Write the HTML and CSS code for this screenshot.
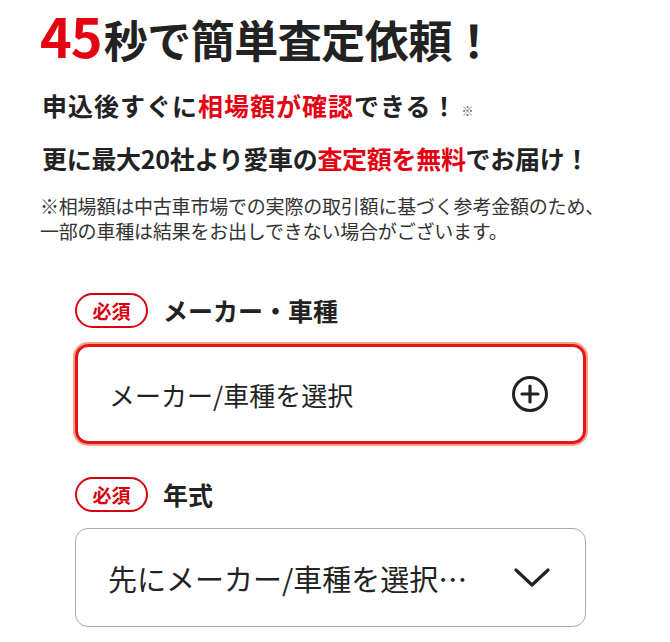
FILE: index.html
```html
<!DOCTYPE html>
<html lang="ja">
<head>
  <meta charset="UTF-8" />
  <meta name="viewport" content="width=device-width, initial-scale=1.0"/>
  <title>45秒で簡単査定依頼</title>
  <link rel="stylesheet" href="styles.css">
</head>
<body>

<div class="container">
  <!-- 見出し -->
  <h1 class="titulo"><span class="num">45</span>秒で簡単査定依頼！</h1>
  <p class="lead lead1">申込後すぐに<span class="rojo">相場額が確認</span>できる！<span class="kome">※</span></p>
  <p class="lead lead2">更に最大20社より愛車の<span class="rojo">査定額を無料</span>でお届け！</p>
  <p class="nota">※相場額は中古車市場での実際の取引額に基づく参考金額のため、<br>一部の車種は結果をお出しできない場合がございます。</p>

  <!-- フォーム -->
  <div class="form">
    <div class="campo">
      <div class="etiqueta"><span class="pill">必須</span>メーカー・車種</div>
      <div class="caja activa">
        <span>メーカー/車種を選択</span>
        <svg class="icono" width="38" height="38" viewBox="0 0 38 38">
          <circle cx="19" cy="19" r="16.5" fill="none" stroke="#222" stroke-width="3"/>
          <path d="M19 11v16M11 19h16" stroke="#222" stroke-width="3.2" stroke-linecap="round"/>
        </svg>
      </div>
    </div>

    <div class="campo">
      <div class="etiqueta"><span class="pill">必須</span>年式</div>
      <div class="caja grande">
        <span>先にメーカー/車種を選択…</span>
        <svg class="icono" width="38" height="24" viewBox="0 0 38 24">
          <path d="M3 4l16 15L35 4" fill="none" stroke="#222" stroke-width="3.2" stroke-linecap="round" stroke-linejoin="round"/>
        </svg>
      </div>
    </div>
  </div>
</div>

</body>
</html>
```

FILE: styles.css
```css
* {
  box-sizing: border-box;
}

body {
  font-family: "Noto Sans CJK JP", "Noto Sans", sans-serif;
  margin: 0;
  padding: 0;
  background: #fff;
  color: #222;
}

.container {
  padding: 8px 0 0 40px;
}

.rojo,
.num {
  color: #e50012;
}

.titulo {
  margin: 0;
  font-size: 44px;
  line-height: 62px;
  font-weight: 700;
  letter-spacing: -0.5px;
}

.titulo .num {
  font-size: 54px;
  line-height: 1;
  letter-spacing: -1px;
  margin-right: 2px;
}

.lead {
  margin: 0;
  font-weight: 700;
  line-height: 54px;
  padding-left: 2px;
}

.lead1 {
  margin-top: 8px;
  font-size: 25px;
  letter-spacing: 1px;
}

.lead2 {
  margin-top: -1px;
  font-size: 25px;
  letter-spacing: -0.3px;
}

.kome {
  font-size: 12px;
  line-height: 1;
  font-weight: 400;
  color: #555;
  margin-left: 4px;
}

.nota {
  margin: 8px 0 0;
  font-size: 19px;
  line-height: 25px;
  color: #333;
  letter-spacing: -0.2px;
}

.form {
  padding: 49px 0 0 35px;
  width: 546px;
}

.campo {
  margin-bottom: 32px;
}

.etiqueta {
  display: flex;
  align-items: center;
  gap: 15px;
  font-size: 25px;
  font-weight: 700;
  height: 36px;
  margin-bottom: 16px;
}

.pill {
  display: inline-flex;
  align-items: center;
  justify-content: center;
  width: 73px;
  height: 35px;
  border: 2px solid #d7000f;
  border-radius: 18px;
  color: #d7000f;
  font-size: 19px;
  font-weight: 700;
}

.caja {
  display: flex;
  align-items: center;
  justify-content: space-between;
  height: 99px;
  padding: 0 34px 0 32px;
  border: 1.5px solid #a9a9a9;
  border-radius: 13px;
  font-size: 26px;
  color: #222;
}

.caja.activa {
  height: 100px;
  border: 3px solid #e8141c;
  box-shadow: 0 0 0 2px #f2a384;
  padding-left: 31px;
}

.caja.grande {
  font-size: 29px;
}
```
